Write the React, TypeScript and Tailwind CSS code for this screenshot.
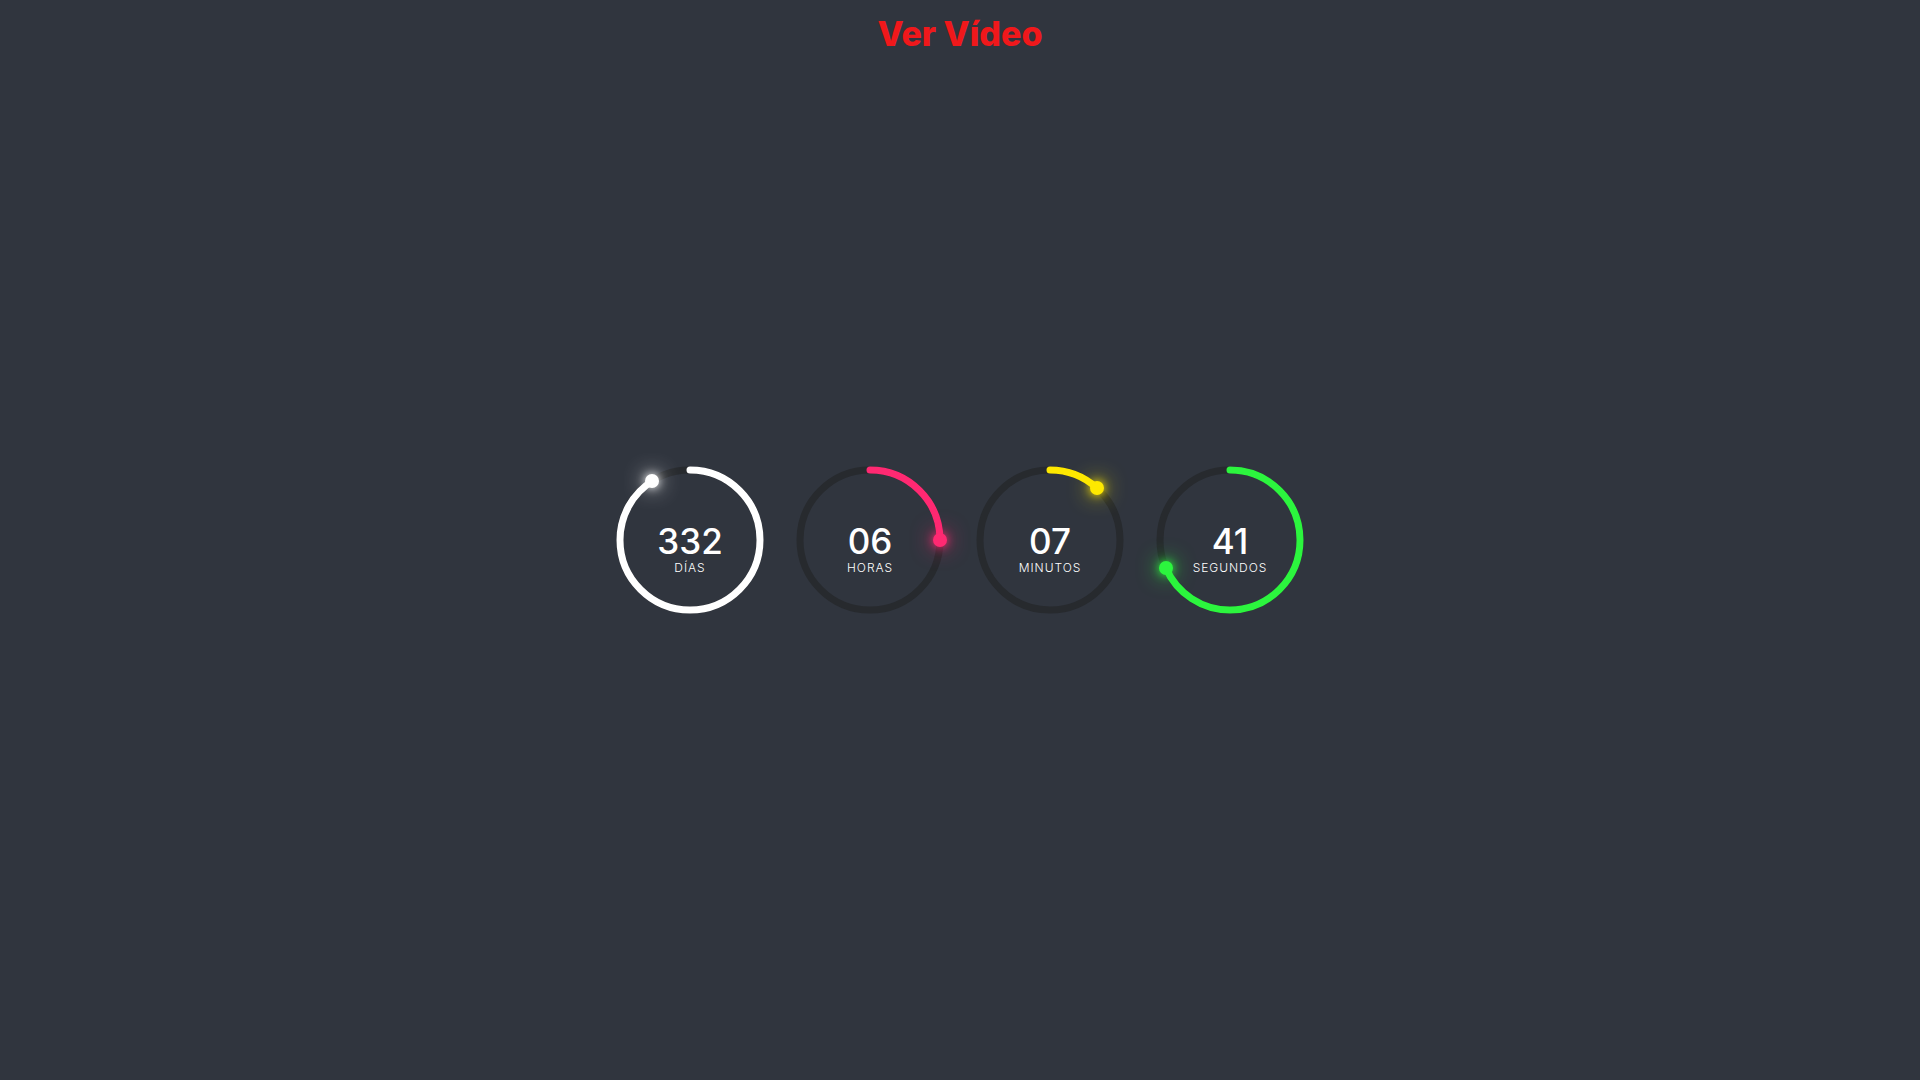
import React from "react";

type Unit = {
  value: string;
  label: string;
  fraction: number;
  color: string;
};

const units: Unit[] = [
  { value: "332", label: "Días", fraction: 332 / 365, color: "#ffffff" },
  { value: "06", label: "Horas", fraction: 6 / 24, color: "#ff2972" },
  { value: "07", label: "Minutos", fraction: 7 / 60, color: "#fee800" },
  { value: "41", label: "Segundos", fraction: 41 / 60, color: "#2cf53e" },
];

const R = 70;
const C = 2 * Math.PI * R;

const Ring = ({ unit }: { unit: Unit }) => {
  const angle = unit.fraction * 2 * Math.PI;
  const dotX = 75 + R * Math.sin(angle);
  const dotY = 75 - R * Math.cos(angle);

  return (
    <div className="relative w-[150px] h-[150px] flex items-center justify-center">
      <svg width="150" height="150" className="absolute inset-0 -rotate-90">
        <circle cx="75" cy="75" r={R} fill="none" stroke="#272a2e" strokeWidth="7" />
        <circle
          cx="75"
          cy="75"
          r={R}
          fill="none"
          stroke={unit.color}
          strokeWidth="7"
          strokeLinecap="round"
          strokeDasharray={C}
          strokeDashoffset={C - C * unit.fraction}
        />
      </svg>
      <div
        className="absolute w-[14px] h-[14px] rounded-full -translate-x-1/2 -translate-y-1/2"
        style={{
          left: dotX,
          top: dotY,
          background: unit.color,
          boxShadow: `0 0 10px ${unit.color}, 0 0 22px ${unit.color}`,
        }}
      />
      <div className="relative pt-[17px] flex flex-col items-center text-white leading-none">
        <span className="text-[35px] font-medium">{unit.value}</span>
        <span className="mt-[3px] text-[12px] font-light uppercase tracking-[0.08em]">
          {unit.label}
        </span>
      </div>
    </div>
  );
};

const App = () => {
  return (
    <div
      className="h-screen w-full bg-[#30353e] grid grid-rows-[1fr_auto_1fr]"
      style={{ fontFamily: "Inter, 'Noto Sans', sans-serif" }}
    >
      <header className="flex justify-center pt-[17px]">
        <h1 className="h-fit text-[34px] leading-none font-extrabold text-[#f0181b]">
          Ver Vídeo
        </h1>
      </header>
      <section className="flex justify-center gap-[30px]">
        {units.map((u) => (
          <Ring key={u.label} unit={u} />
        ))}
      </section>
      <div />
    </div>
  );
};

export default App;
